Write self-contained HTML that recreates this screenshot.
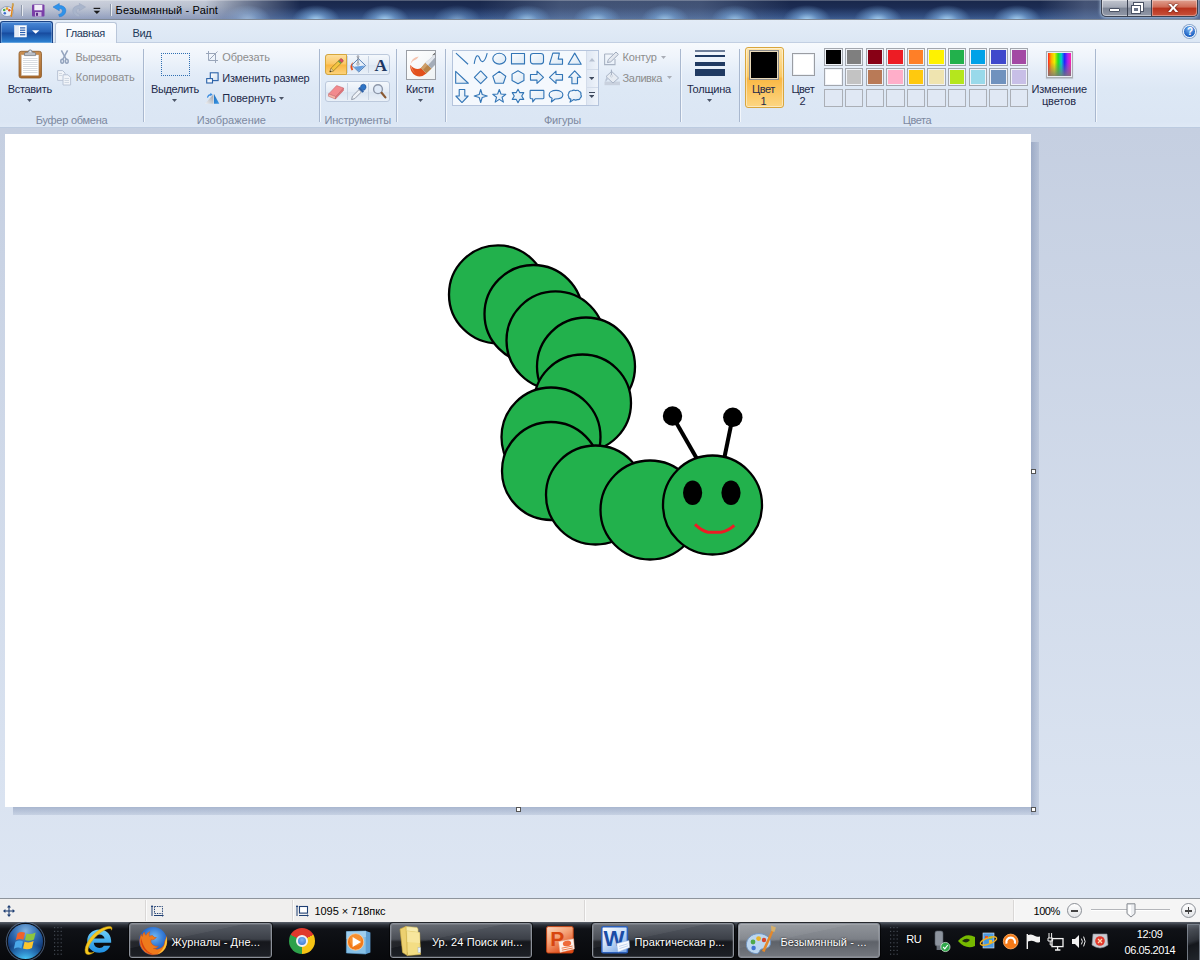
<!DOCTYPE html>
<html lang="ru"><head><meta charset="utf-8"><title>Безымянный - Paint</title>
<style>
*{box-sizing:border-box;margin:0;padding:0}
html,body{width:1200px;height:960px;overflow:hidden;background:#c9d3e3;font-family:"Liberation Sans","DejaVu Sans",sans-serif;font-size:11px;color:#1e2a4a}
.abs,#root *{position:absolute}
#root{position:relative;width:1200px;height:960px;overflow:hidden}
#title{left:0;top:0;width:1200px;height:20px;background:#1b2742}
#tabs{left:0;top:20px;width:1200px;height:23px;background:linear-gradient(#e3ecf7,#dce7f4);border-bottom:1px solid #c2cfe2}
#ribbon{left:0;top:43px;width:1200px;height:85px;background:linear-gradient(#f7fafd,#eff4fb 14px,#e3ecf8 30px,#dde8f5 46px,#dbe6f4 78px,#dfe9f6)}
#work{left:0;top:128px;width:1200px;height:771px;background:linear-gradient(#c5cfe1,#dde6f3)}
#canvas{left:5px;top:134px;width:1026px;height:673px;background:#fff}
#status{left:0;top:898px;width:1200px;height:24px;background:#f0efee;border-top:1px solid #8e949c}
#taskbar{left:0;top:921px;width:1200px;height:39px;background:#141a25}
.t{white-space:nowrap;line-height:14px;height:14px}
.c{text-align:center}
.gl{color:#7d89a0;font-size:11px}
.dis{color:#8d8d8d}
.sep{width:1px;top:49px;height:73px;background:#a9b8cf;box-shadow:1px 0 0 #f3f7fc}
.hd{width:5px;height:5px;background:#fff;border:1px solid #555}
</style></head><body><div id="root">
<div id="title" style="background:radial-gradient(ellipse 24px 15px at 247px 20px,rgba(175,218,250,0.95),rgba(130,180,230,0.57) 45%,rgba(90,130,190,0) 100%),radial-gradient(ellipse 24px 15px at 316px 20px,rgba(175,218,250,0.95),rgba(130,180,230,0.57) 45%,rgba(90,130,190,0) 100%),radial-gradient(ellipse 24px 15px at 385px 20px,rgba(175,218,250,0.95),rgba(130,180,230,0.57) 45%,rgba(90,130,190,0) 100%),radial-gradient(ellipse 24px 15px at 457px 20px,rgba(175,218,250,0.55),rgba(130,180,230,0.33) 45%,rgba(90,130,190,0) 100%),radial-gradient(ellipse 24px 15px at 527px 20px,rgba(175,218,250,0.8),rgba(130,180,230,0.48) 45%,rgba(90,130,190,0) 100%),radial-gradient(ellipse 24px 15px at 597px 20px,rgba(175,218,250,0.8),rgba(130,180,230,0.48) 45%,rgba(90,130,190,0) 100%),radial-gradient(ellipse 24px 15px at 665px 20px,rgba(175,218,250,0.8),rgba(130,180,230,0.48) 45%,rgba(90,130,190,0) 100%),radial-gradient(ellipse 24px 15px at 735px 20px,rgba(175,218,250,0.8),rgba(130,180,230,0.48) 45%,rgba(90,130,190,0) 100%),radial-gradient(ellipse 24px 15px at 807px 20px,rgba(175,218,250,0.95),rgba(130,180,230,0.57) 45%,rgba(90,130,190,0) 100%),radial-gradient(ellipse 24px 15px at 878px 20px,rgba(175,218,250,0.95),rgba(130,180,230,0.57) 45%,rgba(90,130,190,0) 100%),radial-gradient(ellipse 24px 15px at 947px 20px,rgba(175,218,250,0.95),rgba(130,180,230,0.57) 45%,rgba(90,130,190,0) 100%),radial-gradient(ellipse 24px 15px at 1017px 20px,rgba(175,218,250,0.95),rgba(130,180,230,0.57) 45%,rgba(90,130,190,0) 100%),linear-gradient(90deg,rgba(0,0,0,0) 480px,rgba(130,150,180,.38) 560px,rgba(130,150,180,.38) 700px,rgba(0,0,0,0) 790px),linear-gradient(rgba(0,0,0,0) 35%,rgba(80,120,180,.42)),linear-gradient(#19274a,#1c2d55 45%,#263c6a 80%,#34507f)"></div>
<div style="left:0;top:0;width:310px;height:20px;background:linear-gradient(rgba(255,255,255,.2),rgba(255,255,255,0) 35%,rgba(70,92,150,.42)),linear-gradient(90deg,rgba(206,211,222,.97),rgba(192,199,213,.95) 200px,rgba(180,190,208,.95));-webkit-mask-image:linear-gradient(90deg,#000 205px,rgba(0,0,0,.55) 245px,transparent 300px);mask-image:linear-gradient(90deg,#000 205px,rgba(0,0,0,.55) 245px,transparent 300px)"></div>
<div style="left:0;top:0;width:1200px;height:1px;background:rgba(255,255,255,.25)"></div>
<div style="left:1040px;top:0;width:160px;height:20px;background:linear-gradient(90deg,rgba(120,135,165,0),rgba(120,135,165,.45) 45px,rgba(120,135,165,.45))"></div>
<div style="left:0;top:19px;width:1200px;height:1px;background:#7f8894"></div>
<div id="tabs"></div>
<!-- quick access icons -->
<svg style="left:0;top:2px" width="112" height="17" viewBox="0 2 112 17">
 <ellipse cx="7" cy="11.5" rx="6.3" ry="5" fill="#e9eef6" stroke="#8292ad" stroke-width=".8"/>
 <circle cx="4.2" cy="10" r="1.3" fill="#4aa84a"/><circle cx="7" cy="8.6" r="1.3" fill="#e2a21f"/><circle cx="4.8" cy="13.3" r="1.3" fill="#3f6fd0"/><circle cx="9.3" cy="10.3" r="1.2" fill="#d8412f"/>
 <path d="M12.2 4 L13.6 4.5 L12 17 L10.4 16.6 Z" fill="#e08a1e"/><path d="M12 3 L14 3.6 L13.5 6.5 L11.8 6 Z" fill="#c9a35a"/>
 <rect x="21" y="5" width="1" height="11" fill="#8e98aa"/><rect x="22" y="5" width="1" height="11" fill="#e6eaf0"/>
 <rect x="32" y="4.5" width="12.5" height="12" rx="1" fill="#7a3fa8"/><rect x="34.3" y="5" width="8" height="5.3" fill="#f2eef8"/><rect x="35" y="12" width="6.5" height="4.5" fill="#c9b6dd"/><rect x="36" y="12.8" width="2" height="3" fill="#5a2c85"/>
 <path d="M53 7 L59.3 3.4 L59.3 5.6 C63.6 5.4 66 8 65.8 11 C65.6 14 63 16.4 59.6 16.8 L58.6 14.6 C61 14 62.4 12.6 62.4 11 C62.4 9.4 61.2 8.6 59.3 8.6 L59.3 10.8 Z" fill="#2f93ea" stroke="#1e74cf" stroke-width=".5"/>
 <path d="M85.6 7 L79.3 3.4 L79.3 5.6 C75 5.4 72.6 8 72.8 11 C73 14 75.6 16.4 79 16.8 L80 14.6 C77.6 14 76.2 12.6 76.2 11 C76.2 9.4 77.4 8.6 79.3 8.6 L79.3 10.8 Z" fill="#a9b5cb" stroke="#9aa7bf" stroke-width=".5"/>
 <rect x="93.6" y="7.8" width="6.6" height="1.2" fill="#1a1a1a"/><path d="M93.6 10.8 L100.2 10.8 L96.9 14 Z" fill="#1a1a1a"/>
 <rect x="110" y="4" width="1" height="12" fill="#8e98aa"/><rect x="111" y="4" width="1" height="12" fill="#e6eaf0"/>
</svg>
<!-- window buttons -->
<div style="left:1101px;top:0;width:97px;height:17px;border:1px solid #3b4252;border-top:none;border-radius:0 0 5px 5px;background:linear-gradient(#c2c6cf,#a3a9b6 45%,#7c8494 50%,#9299a8);box-shadow:0 0 0 1px rgba(255,255,255,.45) inset,0 0 3px 1px rgba(200,225,250,.7)"></div>
<div style="left:1127px;top:0;width:1px;height:16px;background:#3b4252"></div>
<div style="left:1152px;top:0;width:45px;height:16px;border-radius:0 0 4px 0;background:linear-gradient(#e0a090,#cf6a55 45%,#b8321c 50%,#c8513a);box-shadow:-1px 0 0 #3b4252,0 0 0 1px rgba(255,255,255,.35) inset"></div>
<div style="left:1109px;top:8px;width:11px;height:4px;background:#fff;border:1px solid #4a5264;border-radius:1px"></div>
<div style="left:1134px;top:3px;width:9px;height:8px;border:2px solid #fff;box-shadow:0 0 0 1px #4a5264"></div>
<div style="left:1132px;top:6px;width:8px;height:7px;border:2px solid #fff;background:#6a7488;box-shadow:0 0 0 1px #4a5264"></div>
<div class="t" style="left:1168px;top:-1px;font-size:15px;font-weight:700;color:#fff;line-height:16px;height:16px;text-shadow:0 0 1px #5a1a10,0 0 2px #5a1a10;transform:scaleX(1.25);transform-origin:left">x</div>
<!-- file button -->
<div style="left:0;top:21px;width:53px;height:22px;border-radius:3px 3px 0 0;border:1px solid #1b4487;border-bottom:none;background:linear-gradient(#4a8ad8,#2560b5 48%,#174a9e 52%,#2f86d6);box-shadow:0 0 0 1px rgba(255,255,255,.25) inset"></div>
<svg style="left:14px;top:25.2px" width="28" height="14" viewBox="0 0 28 14">
 <rect x=".5" y=".5" width="12" height="11.5" fill="#fff" stroke="#dfe8f5" stroke-width=".6"/>
 <rect x="1" y="1" width="4" height="10.5" fill="#e6ecf5"/>
 <g fill="#2a5fb0"><rect x="6" y="2.3" width="5.3" height="1.2"/><rect x="6" y="4.6" width="5.3" height="1.2"/><rect x="6" y="6.9" width="5.3" height="1.2"/><rect x="6" y="9.2" width="5.3" height="1.2"/></g>
 <path d="M18 5.2 L25.4 5.2 L21.7 8.8 Z" fill="#fff"/>
</svg>
<!-- active tab -->
<div style="left:55px;top:22px;width:62px;height:21px;border:1px solid #b9c6d9;border-bottom:none;border-radius:3px 3px 0 0;background:linear-gradient(#fbfdff,#f1f6fc)"></div>
<!-- help -->
<div style="left:1183px;top:25px;width:13px;height:13px;border-radius:50%;background:radial-gradient(circle at 50% 30%,#7db6f2,#1f63c4 70%);border:1px solid #e8f0fa;box-shadow:0 0 0 1px #8aa6cc"></div>
<div class="t" style="left:1187px;top:24.5px;font-size:10px;font-weight:700;color:#fff">?</div>

<div id="ribbon"></div>
<div style="left:0;top:127px;width:1200px;height:1px;background:#bccbe0"></div>
<div style="left:0;top:128px;width:1200px;height:2px;background:linear-gradient(#a9b5c9,#c2cce0)"></div>
<div class="sep" style="left:143.0px"></div>
<div class="sep" style="left:319.0px"></div>
<div class="sep" style="left:395.5px"></div>
<div class="sep" style="left:445.0px"></div>
<div class="sep" style="left:679.5px"></div>
<div class="sep" style="left:739.0px"></div>
<div class="sep" style="left:1095.0px"></div>
<svg style="left:27.1px;top:99.3px" width="5" height="3" viewBox="0 0 5 3"><path d="M0 0 L5 0 L2.5 3 Z" fill="#4c5567"/></svg>
<svg style="left:172.3px;top:99.3px" width="5" height="3" viewBox="0 0 5 3"><path d="M0 0 L5 0 L2.5 3 Z" fill="#4c5567"/></svg>
<svg style="left:417.8px;top:99.0px" width="5" height="3" viewBox="0 0 5 3"><path d="M0 0 L5 0 L2.5 3 Z" fill="#4c5567"/></svg>
<svg style="left:706.5px;top:99.0px" width="5" height="3" viewBox="0 0 5 3"><path d="M0 0 L5 0 L2.5 3 Z" fill="#4c5567"/></svg>
<svg style="left:279.0px;top:96.5px" width="5" height="3" viewBox="0 0 5 3"><path d="M0 0 L5 0 L2.5 3 Z" fill="#4c5567"/></svg>
<svg style="left:661.0px;top:55.5px" width="5" height="3" viewBox="0 0 5 3"><path d="M0 0 L5 0 L2.5 3 Z" fill="#a9adb6"/></svg>
<svg style="left:666.5px;top:76.0px" width="5" height="3" viewBox="0 0 5 3"><path d="M0 0 L5 0 L2.5 3 Z" fill="#a9adb6"/></svg>
<svg style="left:17px;top:48px" width="28" height="32" viewBox="17 48 28 32">
<defs><linearGradient id="gb" x1="0" y1="0" x2="0" y2="1"><stop offset="0" stop-color="#c98f52"/><stop offset="1" stop-color="#a8682c"/></linearGradient></defs>
<rect x="19" y="51.3" width="22.5" height="26.7" rx="2.2" fill="url(#gb)" stroke="#8d5a28" stroke-width=".8"/>
<rect x="21.6" y="55" width="17" height="20.3" fill="#fff" stroke="#d8d8d8" stroke-width=".5"/>
<g stroke="#c9ced6" stroke-width=".7"><line x1="23" y1="58.5" x2="37.5" y2="58.5"/><line x1="23" y1="60.5" x2="37.5" y2="60.5"/><line x1="23" y1="62.5" x2="37.5" y2="62.5"/><line x1="23" y1="64.5" x2="37.5" y2="64.5"/><line x1="23" y1="66.5" x2="37.5" y2="66.5"/><line x1="23" y1="68.5" x2="37.5" y2="68.5"/><line x1="23" y1="70.5" x2="37.5" y2="70.5"/><line x1="23" y1="72.5" x2="37.5" y2="72.5"/></g>
<path d="M24.5 55.6 L24.5 53.6 Q24.5 52.6 26 52.4 L28 52.2 Q28.4 49.8 30.2 49.8 Q32 49.8 32.4 52.2 L34.4 52.4 Q35.6 52.6 35.6 53.6 L35.6 55.6 Z" fill="#b9bec6" stroke="#6f747c" stroke-width=".7"/>
<circle cx="30.2" cy="51.6" r=".8" fill="#f2f2f2"/>
</svg>
<svg style="left:60px;top:49.5px" width="9" height="14" viewBox="0 0 9 14"><g fill="none" stroke="#93a3bd" stroke-width="1.5"><line x1="1.4" y1=".4" x2="6.2" y2="9.4"/><line x1="7.6" y1=".4" x2="2.8" y2="9.4"/><ellipse cx="2.2" cy="11.2" rx="1.4" ry="2"/><ellipse cx="6.8" cy="11.2" rx="1.4" ry="2"/></g></svg>
<svg style="left:57px;top:70px" width="15" height="16" viewBox="0 0 15 16"><g fill="#f1f4f9" stroke="#b4bfd1" stroke-width=".9"><path d="M.6 .6 L5.6 .6 L8 3 L8 10.4 L.6 10.4 Z"/><path d="M6 4.8 L11 4.8 L13.6 7.4 L13.6 15 L6 15 Z"/></g><g stroke="#c2cbd9" stroke-width=".7"><line x1="2" y1="3.5" x2="5" y2="3.5"/><line x1="2" y1="5.5" x2="5" y2="5.5"/><line x1="7.5" y1="8.5" x2="12" y2="8.5"/><line x1="7.5" y1="10.5" x2="12" y2="10.5"/><line x1="7.5" y1="12.5" x2="12" y2="12.5"/></g></svg>
<div style="left:161px;top:53px;width:29px;height:23px;border:1px dotted #2f6fb2"></div>
<svg style="left:205.8px;top:50.8px" width="12" height="12" viewBox="0 0 12 12"><g fill="none" stroke="#9aa6ba" stroke-width="1"><path d="M2.5 0 L2.5 9.5 L12 9.5"/><path d="M0 2.5 L9.5 2.5 L9.5 12"/><line x1="3.5" y1="8.5" x2="11.5" y2=".5"/></g></svg>
<svg style="left:206px;top:72px" width="13" height="12" viewBox="0 0 13 12"><defs><linearGradient id="rz" x1="0" y1="0" x2="1" y2="1"><stop offset="0" stop-color="#fff"/><stop offset="1" stop-color="#cfdff0"/></linearGradient></defs><rect x="4.3" y=".8" width="7.8" height="7.8" fill="url(#rz)" stroke="#2a62a8" stroke-width="1.1"/><rect x=".7" y="6.6" width="5.8" height="4.4" fill="#f2f7fc" stroke="#2a62a8" stroke-width="1.1"/></svg>
<svg style="left:204px;top:92px" width="16" height="12" viewBox="204 92 16 12"><defs><linearGradient id="rg1" x1="0" y1="1" x2="1" y2="0"><stop offset="0" stop-color="#f2f2f2"/><stop offset="1" stop-color="#9aa0aa"/></linearGradient><linearGradient id="rg2" x1="0" y1="0" x2="1" y2="1"><stop offset="0" stop-color="#1c6fc0"/><stop offset="1" stop-color="#3f9ae6"/></linearGradient></defs><path d="M205 103.7 L213.4 103.7 L213.4 94.2 Z" fill="url(#rg1)"/><path d="M214 94 L214 103.7 L219.3 103.7 Z" fill="url(#rg2)"/><path d="M207.4 97.6 Q208.2 94.6 211 94.6" fill="none" stroke="#3a8de0" stroke-width="1.1"/><path d="M210.4 92.8 L212.6 94.6 L210.4 96.2 Z" fill="#3a8de0"/></svg>
<div style="left:325px;top:54.3px;width:65px;height:20.5px;border:1px solid #bcc9dc;border-radius:3px;background:linear-gradient(#f4f8fc,#e4ecf6 50%,#dbe5f1 52%,#e9f0f8)"></div>
<div style="left:346.5px;top:56.3px;width:1px;height:16.5px;background:#c8d3e2"></div><div style="left:368px;top:56.3px;width:1px;height:16.5px;background:#c8d3e2"></div>
<div style="left:325px;top:81.4px;width:65px;height:20.5px;border:1px solid #bcc9dc;border-radius:3px;background:linear-gradient(#f4f8fc,#e4ecf6 50%,#dbe5f1 52%,#e9f0f8)"></div>
<div style="left:346.5px;top:83.4px;width:1px;height:16.5px;background:#c8d3e2"></div><div style="left:368px;top:83.4px;width:1px;height:16.5px;background:#c8d3e2"></div>
<div style="left:325px;top:54.3px;width:22px;height:20.5px;border:1px solid #d6a73c;border-radius:3px 0 0 3px;background:linear-gradient(#fddf9e,#fbc764 48%,#fab63f 52%,#fcd27c)"></div>
<svg style="left:328px;top:58px" width="16.2" height="15.3" viewBox="0 0 18 17"><path d="M2 15.5 L3.4 11.3 L12.6 2.2 L15.4 5 L6.2 14.2 Z" fill="#f3c540" stroke="#8a6a1a" stroke-width=".7"/><path d="M12.6 2.2 L14 .9 Q14.8 .4 15.6 1.2 L16.6 2.3 Q17.2 3.1 16.6 3.8 L15.4 5 Z" fill="#e0506a" stroke="#8a3a3a" stroke-width=".6"/><path d="M11.6 3.2 L14.4 6" stroke="#4c9a4c" stroke-width="1.4"/><path d="M2 15.5 L3.4 11.3 L6.2 14.2 Z" fill="#e8cfa0" stroke="#8a6a1a" stroke-width=".5"/><path d="M2 15.5 L2.6 13.8 L3.8 15 Z" fill="#222"/></svg>
<svg style="left:348px;top:55px" width="20" height="19" viewBox="0 0 20 19"><path d="M3.6 15.6 Q.6 10.6 5.4 6.8 Q3.4 10.4 5.2 14.8 Z" fill="#e8501e"/><path d="M10.4 3.6 L17.6 10.6 L10.8 17 L3.8 10.2 Z" fill="#e9f1fa" stroke="#4a76b0" stroke-width=".9"/><path d="M6 11.8 L10.8 16.6 L16.8 10.6 Z" fill="#4f8fd8" opacity=".85"/><path d="M10 1.4 L10 8.6" stroke="#7a7f88" stroke-width="1"/><circle cx="10" cy="9" r="1.2" fill="#fff" stroke="#6a6f78" stroke-width=".6"/><circle cx="10" cy="1.6" r="1" fill="#c8ccd3" stroke="#7a7f88" stroke-width=".5"/></svg>
<div class="t" style="left:374.4px;top:55.9px;font-family:'Liberation Serif',serif;font-weight:700;font-size:17.5px;line-height:18px;height:18px;color:#1f3864">A</div>
<svg style="left:327px;top:83px" width="19" height="17" viewBox="0 0 19 17"><path d="M1.6 11 L9.6 2.6 L16.6 5 L8.8 13.6 Z" fill="#f28a8e" stroke="#c86a6e" stroke-width=".6"/><path d="M1.6 11 L8.8 13.6 L8.4 16 L1.4 13.2 Z" fill="#f9b9a8" stroke="#c86a6e" stroke-width=".6"/><path d="M8.8 13.6 L16.6 5 L16.4 7.6 L8.4 16 Z" fill="#e27378" stroke="#c86a6e" stroke-width=".6"/></svg>
<svg style="left:350px;top:83px" width="17" height="18" viewBox="0 0 17 18"><path d="M1.6 16.6 L2.4 13.2 L9 6.6 L11.4 9 L4.8 15.6 Z" fill="#eef2f7" stroke="#7d8796" stroke-width=".8"/><path d="M8.2 5.4 L12.6 9.8 L14 8.4 L9.6 4 Z" fill="#2a5ea6"/><path d="M10.4 4.8 Q10.4 1 13.6 1.2 Q16.6 1.6 16 4.8 Q15.4 7.4 13 7.4 Z" fill="#2e74c6" stroke="#1d4f94" stroke-width=".6"/></svg>
<svg style="left:371px;top:83px" width="18" height="18" viewBox="371 83 18 18"><circle cx="378" cy="89.2" r="4.4" fill="#dfeaf8" stroke="#8c96a8" stroke-width="1.4"/><path d="M381.6 92.8 L385.4 97.4" stroke="#8a5a34" stroke-width="2.2" stroke-linecap="round"/></svg>
<div style="left:406px;top:50px;width:30px;height:29.5px;border:1px solid #9b9fa6;background:linear-gradient(135deg,#fff,#eef2f4)"></div>
<svg style="left:407px;top:51px" width="28" height="27.5" viewBox="0 0 28 27.5"><path d="M11.6 5.6 Q4 6.8 3.4 14.6 Q4 10 9 8.4 Q11 7.4 11.6 5.6 Z" fill="#f4b8a0" opacity=".85"/><path d="M3.2 14 Q2.6 21 8.6 24.6 Q14.4 27 19.4 22.6 L14 17 Q9 20 3.2 14 Z" fill="#e2501c"/><path d="M3.2 14 Q4.4 20 9 22.6 Q5 19.4 4.6 15 Z" fill="#f39a78"/><path d="M14 17 L19.4 22.6 L24.6 17.6 L18.4 11.8 Z" fill="#b8844a"/><path d="M14 17 L16 19 L20.6 14 L18.4 11.8 Z" fill="#cfa06a"/><path d="M18.4 11.8 L24.6 17.6 L28 14 L28 3.4 Z" fill="#a4acb8"/><path d="M18.4 11.8 L21 14.2 L28 6.6 L28 3.4 Z" fill="#e3e7ed"/><path d="M25 4.6 L28 1.8 L28 3.6 Z" fill="#555"/></svg>
<div style="left:452px;top:50px;width:147px;height:56px;border:1px solid #b5c4dc;background:#f4f8fd"></div>
<div style="left:585.5px;top:51px;width:12.5px;height:54px;background:linear-gradient(90deg,#dfe7f3,#eef3fa);border-left:1px solid #d3dcea"></div>
<div style="left:585.5px;top:68.5px;width:12.5px;height:1px;background:#d3dcea"></div><div style="left:585.5px;top:87px;width:12.5px;height:1px;background:#d3dcea"></div>
<svg style="left:589px;top:58px" width="6" height="4" viewBox="0 0 6 4"><path d="M0 3.5 L3 0 L6 3.5 Z" fill="#b6c0d0"/></svg>
<svg style="left:589.1px;top:76.8px" width="5.4" height="3" viewBox="0 0 5.4 3"><path d="M0 0 L5.4 0 L2.7 3 Z" fill="#3f4a5e"/></svg>
<div style="left:589px;top:92px;width:5.6px;height:1.2px;background:#3f4a5e"></div>
<svg style="left:589.1px;top:94.8px" width="5.4" height="3" viewBox="0 0 5.4 3"><path d="M0 0 L5.4 0 L2.7 3 Z" fill="#3f4a5e"/></svg>
<svg style="left:452px;top:50px" width="135" height="56" viewBox="452 50 135 56"><defs><linearGradient id="sf" x1="0" y1="0" x2="1" y2="1"><stop offset="0" stop-color="#fafcfe"/><stop offset="1" stop-color="#dbe8f4"/></linearGradient></defs><g fill="url(#sf)" stroke="#3275b6" stroke-width="1.2" stroke-linejoin="round"><g transform="translate(462,58.7) scale(.93)"><line x1="-6.5" y1="-6" x2="6.5" y2="6"/></g><g transform="translate(480.7,58.7) scale(.93)"><path d="M-7 5.5 C-5 -6,-2.5 -4,-1 0 S4 6,7 -6" fill="none"/></g><g transform="translate(499.3,58.7) scale(.93)"><ellipse cx="0" cy="0" rx="7" ry="5.8"/></g><g transform="translate(518,58.7) scale(.93)"><rect x="-7" y="-5.6" width="14" height="11.2"/></g><g transform="translate(537,58.7) scale(.93)"><rect x="-7" y="-5.6" width="14" height="11.2" rx="2.8"/></g><g transform="translate(556,58.7) scale(.93)"><path d="M-7 6 L-3.4 -6 L3.6 -6 L2.4 .4 L7 .4 L7 6 Z"/></g><g transform="translate(574.7,58.7) scale(.93)"><path d="M-7 6 L0 -6 L7 6 Z"/></g><g transform="translate(462,77.3) scale(.93)"><path d="M-6.8 6.4 L-6.8 -6.4 L6.8 6.4 Z"/></g><g transform="translate(480.7,77.3) scale(.93)"><path d="M0 -6.8 L6.8 0 L0 6.8 L-6.8 0 Z"/></g><g transform="translate(499.3,77.3) scale(.93)"><path d="M0 -6.4 L7 -1.2 L4.4 6.4 L-4.4 6.4 L-7 -1.2 Z"/></g><g transform="translate(518,77.3) scale(.93)"><path d="M0 -7 L6.4 -3.4 L6.4 3.4 L0 7 L-6.4 3.4 L-6.4 -3.4 Z"/></g><g transform="translate(537,77.3) scale(.93)"><path d="M-7 -3 L0 -3 L0 -6.6 L7 0 L0 6.6 L0 3 L-7 3 Z"/></g><g transform="translate(556,77.3) scale(.93)"><path d="M7 -3 L0 -3 L0 -6.6 L-7 0 L0 6.6 L0 3 L7 3 Z"/></g><g transform="translate(574.7,77.3) scale(.93)"><path d="M-3 7 L-3 0 L-6.6 0 L0 -7 L6.6 0 L3 0 L3 7 Z"/></g><g transform="translate(462,96) scale(.93)"><path d="M-3 -7 L-3 0 L-6.6 0 L0 7 L6.6 0 L3 0 L3 -7 Z"/></g><g transform="translate(480.7,96) scale(.93)"><path d="M0 -7 L1.6 -1.6 L7 0 L1.6 1.6 L0 7 L-1.6 1.6 L-7 0 L-1.6 -1.6 Z"/></g><g transform="translate(499.3,96) scale(.93)"><path d="M0 -7 L1.8 -2.2 L7 -1.8 L3 1.4 L4.4 6.6 L0 3.6 L-4.4 6.6 L-3 1.4 L-7 -1.8 L-1.8 -2.2 Z"/></g><g transform="translate(518,96) scale(.93)"><path d="M0 -7.2 L2 -3.6 L6.2 -3.6 L4 0 L6.2 3.6 L2 3.6 L0 7.2 L-2 3.6 L-6.2 3.6 L-4 0 L-6.2 -3.6 L-2 -3.6 Z"/></g><g transform="translate(537,96) scale(.93)"><path d="M-7 -6 L7 -6 Q7.4 -6 7.4 -5 L7.4 2 Q7.4 3 6.4 3 L-2 3 L-4.6 6.4 L-4.6 3 L-6.4 3 Q-7.4 3 -7.4 2 L-7.4 -5 Q-7.4 -6 -7 -6 Z"/></g><g transform="translate(556,96) scale(.93)"><path d="M0 -6 C4.4 -6 7.4 -4 7.4 -1.4 C7.4 1.4 4 3.2 -1 3.2 L-5 6.4 L-4.2 2.4 C-6.4 1.6 -7.4 .2 -7.4 -1.4 C-7.4 -4 -4.4 -6 0 -6 Z"/></g><g transform="translate(574.7,96) scale(.93)"><path d="M-3 -5.6 Q-1 -7 1 -5.8 Q3.6 -6.8 5 -4.8 Q7.4 -4 6.6 -1.6 Q8 .6 6 2 Q5.6 4.2 3 3.8 Q1 5 -1 3.8 L-5 6.6 L-4 3.4 Q-6.6 3 -6.4 .8 Q-8 -1 -6.4 -2.8 Q-6.4 -5.4 -3 -5.6 Z"/></g></g></svg>
<svg style="left:604px;top:51px" width="16" height="15" viewBox="0 0 16 15"><path d="M.6 3 L9 3 M.6 3 L.6 13.6 L11 13.6 L11 8" fill="none" stroke="#a9b3c4" stroke-width="1.1"/><path d="M3.4 11.6 L4.4 8.4 L12 1 L14.4 3.4 L6.8 10.8 Z" fill="#e4e8ef" stroke="#9aa5b8" stroke-width=".9"/></svg>
<svg style="left:604px;top:69px" width="17" height="17" viewBox="0 0 17 17"><rect x=".5" y="12.6" width="15.5" height="3.6" fill="#c9d1de"/><path d="M7.6 2.4 L14.6 9 L9 14 L2 7.6 Z" fill="#e6ebf2" stroke="#a3aec1" stroke-width=".9"/><path d="M2.6 8.4 Q.6 11 1.6 13 L4 10 Z" fill="#b9c3d3"/><path d="M7.4 .6 L7.4 6.6" stroke="#a3aec1" stroke-width="1"/><circle cx="7.4" cy="7" r="1" fill="#fff" stroke="#a3aec1" stroke-width=".5"/></svg>
<div style="left:694.7px;top:50.4px;width:30px;height:1.2px;background:#6f7f9a"></div><div style="left:694.7px;top:55px;width:30px;height:2px;background:#203a62"></div><div style="left:694.7px;top:62px;width:30px;height:3.6px;background:#203a62"></div><div style="left:694.7px;top:69.4px;width:30px;height:6.2px;background:#203a62"></div>
<div style="left:744.6px;top:47.3px;width:39.2px;height:61.2px;border:1px solid #d9a63c;border-radius:3px;background:linear-gradient(#fde3a8,#fbc964 48%,#fab844 52%,#fcd683);box-shadow:0 0 0 1px rgba(255,255,255,.45) inset"></div>
<div style="left:749.3px;top:49.6px;width:29.8px;height:30.2px;border:1px solid #8c8c8c;background:#000;box-shadow:0 0 0 1px #e9d9b8 inset"></div>
<div style="left:792px;top:53.3px;width:22.8px;height:22.5px;border:1px solid #9a9da3;background:#fff;box-shadow:0 0 0 1px #eef1f5 inset"></div>
<div style="left:824.3px;top:48px;width:18.4px;height:18.2px;border:1px solid #a3a7ae;background:#000000;box-shadow:0 0 0 1px #f0f3f8 inset"></div>
<div style="left:844.9px;top:48px;width:18.4px;height:18.2px;border:1px solid #a3a7ae;background:#7f7f7f;box-shadow:0 0 0 1px #f0f3f8 inset"></div>
<div style="left:865.6px;top:48px;width:18.4px;height:18.2px;border:1px solid #a3a7ae;background:#880015;box-shadow:0 0 0 1px #f0f3f8 inset"></div>
<div style="left:886.2px;top:48px;width:18.4px;height:18.2px;border:1px solid #a3a7ae;background:#ed1c24;box-shadow:0 0 0 1px #f0f3f8 inset"></div>
<div style="left:906.8px;top:48px;width:18.4px;height:18.2px;border:1px solid #a3a7ae;background:#ff7f27;box-shadow:0 0 0 1px #f0f3f8 inset"></div>
<div style="left:927.4px;top:48px;width:18.4px;height:18.2px;border:1px solid #a3a7ae;background:#fff200;box-shadow:0 0 0 1px #f0f3f8 inset"></div>
<div style="left:948.1px;top:48px;width:18.4px;height:18.2px;border:1px solid #a3a7ae;background:#22b14c;box-shadow:0 0 0 1px #f0f3f8 inset"></div>
<div style="left:968.7px;top:48px;width:18.4px;height:18.2px;border:1px solid #a3a7ae;background:#00a2e8;box-shadow:0 0 0 1px #f0f3f8 inset"></div>
<div style="left:989.3px;top:48px;width:18.4px;height:18.2px;border:1px solid #a3a7ae;background:#3f48cc;box-shadow:0 0 0 1px #f0f3f8 inset"></div>
<div style="left:1010.0px;top:48px;width:18.4px;height:18.2px;border:1px solid #a3a7ae;background:#a349a4;box-shadow:0 0 0 1px #f0f3f8 inset"></div>
<div style="left:824.3px;top:68.3px;width:18.4px;height:18.2px;border:1px solid #a3a7ae;background:#ffffff;box-shadow:0 0 0 1px #f0f3f8 inset"></div>
<div style="left:844.9px;top:68.3px;width:18.4px;height:18.2px;border:1px solid #a3a7ae;background:#c3c3c3;box-shadow:0 0 0 1px #f0f3f8 inset"></div>
<div style="left:865.6px;top:68.3px;width:18.4px;height:18.2px;border:1px solid #a3a7ae;background:#b97a57;box-shadow:0 0 0 1px #f0f3f8 inset"></div>
<div style="left:886.2px;top:68.3px;width:18.4px;height:18.2px;border:1px solid #a3a7ae;background:#ffaec9;box-shadow:0 0 0 1px #f0f3f8 inset"></div>
<div style="left:906.8px;top:68.3px;width:18.4px;height:18.2px;border:1px solid #a3a7ae;background:#ffc90e;box-shadow:0 0 0 1px #f0f3f8 inset"></div>
<div style="left:927.4px;top:68.3px;width:18.4px;height:18.2px;border:1px solid #a3a7ae;background:#efe4b0;box-shadow:0 0 0 1px #f0f3f8 inset"></div>
<div style="left:948.1px;top:68.3px;width:18.4px;height:18.2px;border:1px solid #a3a7ae;background:#b5e61d;box-shadow:0 0 0 1px #f0f3f8 inset"></div>
<div style="left:968.7px;top:68.3px;width:18.4px;height:18.2px;border:1px solid #a3a7ae;background:#99d9ea;box-shadow:0 0 0 1px #f0f3f8 inset"></div>
<div style="left:989.3px;top:68.3px;width:18.4px;height:18.2px;border:1px solid #a3a7ae;background:#7092be;box-shadow:0 0 0 1px #f0f3f8 inset"></div>
<div style="left:1010.0px;top:68.3px;width:18.4px;height:18.2px;border:1px solid #a3a7ae;background:#c8bfe7;box-shadow:0 0 0 1px #f0f3f8 inset"></div>
<div style="left:824.3px;top:89.2px;width:18.4px;height:18.2px;border:1px solid #abafb6;background:#e0e8f4"></div>
<div style="left:844.9px;top:89.2px;width:18.4px;height:18.2px;border:1px solid #abafb6;background:#e0e8f4"></div>
<div style="left:865.6px;top:89.2px;width:18.4px;height:18.2px;border:1px solid #abafb6;background:#e0e8f4"></div>
<div style="left:886.2px;top:89.2px;width:18.4px;height:18.2px;border:1px solid #abafb6;background:#e0e8f4"></div>
<div style="left:906.8px;top:89.2px;width:18.4px;height:18.2px;border:1px solid #abafb6;background:#e0e8f4"></div>
<div style="left:927.4px;top:89.2px;width:18.4px;height:18.2px;border:1px solid #abafb6;background:#e0e8f4"></div>
<div style="left:948.1px;top:89.2px;width:18.4px;height:18.2px;border:1px solid #abafb6;background:#e0e8f4"></div>
<div style="left:968.7px;top:89.2px;width:18.4px;height:18.2px;border:1px solid #abafb6;background:#e0e8f4"></div>
<div style="left:989.3px;top:89.2px;width:18.4px;height:18.2px;border:1px solid #abafb6;background:#e0e8f4"></div>
<div style="left:1010.0px;top:89.2px;width:18.4px;height:18.2px;border:1px solid #abafb6;background:#e0e8f4"></div>
<div style="left:1045.6px;top:51px;width:27px;height:26.8px;border:1px solid #a9adb3;background:#e9edf2;box-shadow:0 1px 1px rgba(0,0,0,.15)"></div>
<div style="left:1047.6px;top:53px;width:23px;height:22.8px;background:linear-gradient(rgba(128,128,128,0),rgba(128,128,128,0) 40%,rgba(120,120,120,.85)),linear-gradient(90deg,#f22,#fa0 14%,#ee0 28%,#2d2 44%,#0cc 58%,#22f 72%,#a2e 86%,#f2a)"></div>

<div id="work"></div>
<div id="canvas"></div>
<div style="left:1031px;top:142px;width:7.5px;height:672.5px;background:linear-gradient(90deg,rgba(100,120,160,.42),rgba(100,120,160,.17))"></div>
<div style="left:13px;top:807px;width:1018px;height:7.5px;background:linear-gradient(rgba(100,120,160,.42),rgba(100,120,160,.17))"></div>
<svg id="draw" style="left:5px;top:134px" width="1026" height="673" viewBox="5 134 1026 673">
<g fill="#22b14c" stroke="#000" stroke-width="2.3">
<circle cx="498" cy="294.4" r="49"/>
<circle cx="533.5" cy="314" r="49"/>
<circle cx="555.5" cy="340.4" r="49"/>
<circle cx="586" cy="366.5" r="49"/>
<circle cx="582.5" cy="403" r="48.5"/>
<circle cx="551" cy="437" r="49.5"/>
<circle cx="551" cy="471" r="49"/>
<circle cx="595.5" cy="495" r="49.5"/>
<circle cx="650" cy="510" r="49.5"/>
<line x1="673" y1="417" x2="696.5" y2="458" stroke-width="4"/>
<line x1="732.5" y1="418" x2="724.5" y2="457" stroke-width="4"/>
<circle cx="712.5" cy="505" r="49.5"/>
</g>
<circle cx="672.5" cy="416" r="9.7" fill="#000"/>
<circle cx="732.8" cy="417.3" r="9.7" fill="#000"/>
<ellipse cx="692.6" cy="492.8" rx="9.6" ry="12.2" fill="#000"/>
<ellipse cx="731" cy="492.8" rx="9.6" ry="12.2" fill="#000"/>
<path d="M695 524.3 Q702 531 708 532.2 L721 532.2 Q728 531 734.3 525.3" fill="none" stroke="#ed1c24" stroke-width="3"/>
</svg>
<div class="hd" style="left:1031px;top:468.7px"></div>
<div class="hd" style="left:516px;top:807px"></div>
<div class="hd" style="left:1031px;top:807px"></div>

<div id="status"></div>
<div style="left:1013px;top:899px;width:187px;height:22px;background:#f5f5f5"></div>
<div style="left:145.0px;top:900px;width:1px;height:21px;background:#d9d7d6"></div><div style="left:146.0px;top:900px;width:1px;height:21px;background:#fbfbfb"></div>
<div style="left:292.0px;top:900px;width:1px;height:21px;background:#d9d7d6"></div><div style="left:293.0px;top:900px;width:1px;height:21px;background:#fbfbfb"></div>
<div style="left:583.8px;top:900px;width:1px;height:21px;background:#d9d7d6"></div><div style="left:584.8px;top:900px;width:1px;height:21px;background:#fbfbfb"></div>
<div style="left:1012.5px;top:900px;width:1px;height:21px;background:#d9d7d6"></div><div style="left:1013.5px;top:900px;width:1px;height:21px;background:#fbfbfb"></div>
<svg style="left:3px;top:905px" width="12" height="12" viewBox="0 0 12 12"><g stroke="#1f3f73" stroke-width="1.1" fill="#1f3f73"><line x1="6" y1="1.5" x2="6" y2="10.5"/><line x1="1.5" y1="6" x2="10.5" y2="6"/></g><g fill="#1f3f73"><path d="M6 0 L8 2.4 L4 2.4 Z"/><path d="M6 12 L8 9.6 L4 9.6 Z"/><path d="M0 6 L2.4 4 L2.4 8 Z"/><path d="M12 6 L9.6 4 L9.6 8 Z"/></g></svg>
<svg style="left:151px;top:905px" width="13" height="12" viewBox="0 0 13 12"><rect x="3.5" y="1.5" width="8" height="7" fill="none" stroke="#1f3f73" stroke-width="1" stroke-dasharray="1.4 1"/><path d="M1 1 L1 11 M3 10.5 L12 10.5" stroke="#1f3f73" stroke-width="1" fill="none"/><path d="M1 0 L2.4 2 L-.4 2 Z M13 10.5 L11 9.2 L11 11.8 Z" fill="#1f3f73"/></svg>
<svg style="left:296px;top:905px" width="13" height="12" viewBox="0 0 13 12"><rect x="3.5" y="1.5" width="8" height="6.6" fill="#fff" stroke="#1f3f73" stroke-width="1.1"/><path d="M1 1 L1 11 M3 10.5 L12 10.5" stroke="#1f3f73" stroke-width="1" fill="none"/><path d="M1 0 L2.4 2 L-.4 2 Z M13 10.5 L11 9.2 L11 11.8 Z" fill="#1f3f73"/></svg>
<div style="left:1066.5px;top:903.3px;width:15px;height:15px;border-radius:50%;border:1px solid #8b8f96;background:linear-gradient(#fff,#e3e5e8)"></div>
<div style="left:1070.5px;top:910.1px;width:7px;height:1.6px;background:#444"></div>
<div style="left:1181.0px;top:903.3px;width:15px;height:15px;border-radius:50%;border:1px solid #8b8f96;background:linear-gradient(#fff,#e3e5e8)"></div>
<div style="left:1185.0px;top:910.1px;width:7px;height:1.6px;background:#444"></div>
<div style="left:1187.7px;top:907.4px;width:1.6px;height:7px;background:#444"></div>
<div style="left:1090.7px;top:909px;width:79px;height:1px;background:#b4b6ba"></div><div style="left:1090.7px;top:910px;width:79px;height:1px;background:#fff"></div>
<svg style="left:1126px;top:902.6px" width="10" height="15" viewBox="0 0 10 15"><path d="M1 .8 L9 .8 L9 10.6 L5 14 L1 10.6 Z" fill="#eceef1" stroke="#85898f" stroke-width="1"/><path d="M2.2 2 L5 2 L5 12.4 L2.2 10 Z" fill="#fff"/></svg>

<div id="taskbar" style="top:922px;height:38px;background:linear-gradient(#5a616b,#2b2f37 3px,#101217 7px,#0c0e12 50%,#08090c)"></div>

<div style="left:129.3px;top:923.2px;width:142.7px;height:35px;border:1px solid #8b9099;border-radius:3px;background:linear-gradient(168deg,rgba(255,255,255,.13) 0,rgba(255,255,255,.05) 38%,rgba(255,255,255,0) 39%),linear-gradient(#565b64,#3c4048 46%,#15171c 54%,#1d2026);box-shadow:0 0 0 1px rgba(0,0,0,.55),0 0 0 1px rgba(255,255,255,.12) inset"></div>
<div style="left:390px;top:923.2px;width:142px;height:35px;border:1px solid #8b9099;border-radius:3px;background:linear-gradient(168deg,rgba(255,255,255,.13) 0,rgba(255,255,255,.05) 38%,rgba(255,255,255,0) 39%),linear-gradient(#565b64,#3c4048 46%,#15171c 54%,#1d2026);box-shadow:0 0 0 1px rgba(0,0,0,.55),0 0 0 1px rgba(255,255,255,.12) inset"></div>
<div style="left:592px;top:923.2px;width:142px;height:35px;border:1px solid #8b9099;border-radius:3px;background:linear-gradient(168deg,rgba(255,255,255,.13) 0,rgba(255,255,255,.05) 38%,rgba(255,255,255,0) 39%),linear-gradient(#565b64,#3c4048 46%,#15171c 54%,#1d2026);box-shadow:0 0 0 1px rgba(0,0,0,.55),0 0 0 1px rgba(255,255,255,.12) inset"></div>
<div style="left:737.8px;top:923.2px;width:142.20000000000005px;height:35px;border:1px solid #8b9099;border-radius:3px;background:linear-gradient(168deg,rgba(255,255,255,.13) 0,rgba(255,255,255,.05) 38%,rgba(255,255,255,0) 39%),linear-gradient(#90949a,#7c8087 46%,#5e6269 54%,#74787f);box-shadow:0 0 0 1px rgba(0,0,0,.55),0 0 0 1px rgba(255,255,255,.12) inset"></div>
<svg style="left:54px;top:927px" width="9" height="30" viewBox="0 0 9 30"><rect x="0.0" y="0.0" width="1.2" height="1.2" fill="#444a53"/><rect x="3.3" y="0.0" width="1.2" height="1.2" fill="#444a53"/><rect x="6.6" y="0.0" width="1.2" height="1.2" fill="#444a53"/><rect x="0.0" y="3.8" width="1.2" height="1.2" fill="#444a53"/><rect x="3.3" y="3.8" width="1.2" height="1.2" fill="#444a53"/><rect x="6.6" y="3.8" width="1.2" height="1.2" fill="#444a53"/><rect x="0.0" y="7.6" width="1.2" height="1.2" fill="#444a53"/><rect x="3.3" y="7.6" width="1.2" height="1.2" fill="#444a53"/><rect x="6.6" y="7.6" width="1.2" height="1.2" fill="#444a53"/><rect x="0.0" y="11.4" width="1.2" height="1.2" fill="#444a53"/><rect x="3.3" y="11.4" width="1.2" height="1.2" fill="#444a53"/><rect x="6.6" y="11.4" width="1.2" height="1.2" fill="#444a53"/><rect x="0.0" y="15.2" width="1.2" height="1.2" fill="#444a53"/><rect x="3.3" y="15.2" width="1.2" height="1.2" fill="#444a53"/><rect x="6.6" y="15.2" width="1.2" height="1.2" fill="#444a53"/><rect x="0.0" y="19.0" width="1.2" height="1.2" fill="#444a53"/><rect x="3.3" y="19.0" width="1.2" height="1.2" fill="#444a53"/><rect x="6.6" y="19.0" width="1.2" height="1.2" fill="#444a53"/><rect x="0.0" y="22.8" width="1.2" height="1.2" fill="#444a53"/><rect x="3.3" y="22.8" width="1.2" height="1.2" fill="#444a53"/><rect x="6.6" y="22.8" width="1.2" height="1.2" fill="#444a53"/><rect x="0.0" y="26.6" width="1.2" height="1.2" fill="#444a53"/><rect x="3.3" y="26.6" width="1.2" height="1.2" fill="#444a53"/><rect x="6.6" y="26.6" width="1.2" height="1.2" fill="#444a53"/></svg>
<svg style="left:889.5px;top:927px" width="9" height="30" viewBox="0 0 9 30"><rect x="0.0" y="0.0" width="1.2" height="1.2" fill="#444a53"/><rect x="3.3" y="0.0" width="1.2" height="1.2" fill="#444a53"/><rect x="6.6" y="0.0" width="1.2" height="1.2" fill="#444a53"/><rect x="0.0" y="3.8" width="1.2" height="1.2" fill="#444a53"/><rect x="3.3" y="3.8" width="1.2" height="1.2" fill="#444a53"/><rect x="6.6" y="3.8" width="1.2" height="1.2" fill="#444a53"/><rect x="0.0" y="7.6" width="1.2" height="1.2" fill="#444a53"/><rect x="3.3" y="7.6" width="1.2" height="1.2" fill="#444a53"/><rect x="6.6" y="7.6" width="1.2" height="1.2" fill="#444a53"/><rect x="0.0" y="11.4" width="1.2" height="1.2" fill="#444a53"/><rect x="3.3" y="11.4" width="1.2" height="1.2" fill="#444a53"/><rect x="6.6" y="11.4" width="1.2" height="1.2" fill="#444a53"/><rect x="0.0" y="15.2" width="1.2" height="1.2" fill="#444a53"/><rect x="3.3" y="15.2" width="1.2" height="1.2" fill="#444a53"/><rect x="6.6" y="15.2" width="1.2" height="1.2" fill="#444a53"/><rect x="0.0" y="19.0" width="1.2" height="1.2" fill="#444a53"/><rect x="3.3" y="19.0" width="1.2" height="1.2" fill="#444a53"/><rect x="6.6" y="19.0" width="1.2" height="1.2" fill="#444a53"/><rect x="0.0" y="22.8" width="1.2" height="1.2" fill="#444a53"/><rect x="3.3" y="22.8" width="1.2" height="1.2" fill="#444a53"/><rect x="6.6" y="22.8" width="1.2" height="1.2" fill="#444a53"/><rect x="0.0" y="26.6" width="1.2" height="1.2" fill="#444a53"/><rect x="3.3" y="26.6" width="1.2" height="1.2" fill="#444a53"/><rect x="6.6" y="26.6" width="1.2" height="1.2" fill="#444a53"/></svg>
<div style="left:8px;top:924px;width:35px;height:35px;border-radius:50%;background:radial-gradient(ellipse 70% 45% at 50% 100%,#49c8f8,rgba(60,170,240,.6) 50%,rgba(40,120,200,0) 100%),radial-gradient(circle at 50% 20%,#7fb2e0,#2a66ad 40%,#0f3774 70%,#0a2552);box-shadow:0 0 0 1.2px #0a0f18,0 0 0 2.2px rgba(120,150,190,.55)"></div>
<svg style="left:14px;top:929px" width="24" height="24" viewBox="0 0 24 24"><path d="M3.4 4.4 Q7 2 11 3.8 L9.4 10.8 Q5.6 9 1.8 11.2 Z" fill="#f0622a"/><path d="M12.6 4.4 Q16.4 6 21.6 3.4 L20 10.4 Q15.4 12.6 11 11 Z" fill="#8cc63f"/><path d="M1.4 12.8 Q5.4 10.6 9 12.4 L7.4 19.4 Q3.8 17.6 -.2 19.8 Z" fill="#4aa8ea"/><path d="M10.6 12.8 Q15 14.4 19.6 12 L18 19 Q13.6 21.4 9 19.6 Z" fill="#fbc52d"/></svg>
<svg style="left:82px;top:924px" width="34" height="34" viewBox="0 0 34 34"><defs><linearGradient id="ieg" x1="0" y1="0" x2="0" y2="1"><stop offset="0" stop-color="#6fd0fa"/><stop offset="1" stop-color="#1d8ee2"/></linearGradient></defs><path d="M17.4 5.4 C10 5.4 5.2 10.6 5.2 17 C5.2 23.6 10 28.8 17.4 28.8 C22.6 28.8 26.6 26 28.2 21.8 L21.8 21.8 C20.8 23.2 19.4 24 17.4 24 C14.2 24 12 21.8 11.8 18.8 L29.2 18.8 C29.8 11.2 25 5.4 17.4 5.4 Z M12 14.6 C12.6 12 14.6 10.4 17.4 10.4 C20.2 10.4 22.2 12 22.6 14.6 Z" fill="url(#ieg)"/><path d="M29.4 6.2 C32 1.4 25.6 1.2 18.4 5.2 C9 10.6 1.4 22 3.4 28.6 C4.6 32 9.2 30.4 12.2 28 C7.4 30 5 28.4 6.4 23.6 C8 18 15 10.4 21.6 6.6 C26 4 30 3.6 29.4 6.2 Z" fill="#f6c81e" stroke="#d9a40e" stroke-width=".5"/></svg>
<div style="left:139px;top:926.5px;width:28px;height:28px;border-radius:50%;background:radial-gradient(circle at 55% 35%,#6fb6f2,#2a6fd0 45%,#1a3f9a 80%)"></div>
<svg style="left:138px;top:925.5px" width="30" height="30" viewBox="0 0 30 30"><path d="M3.2 8 Q.6 14 2.6 20 Q5.6 27.6 14 28.8 Q22.6 29.4 27 22.6 Q30 17 28.4 10.6 Q28.2 14 26.8 15.6 Q27 19 24 21.6 Q20 24.6 15.4 22.6 Q18.6 22.4 20.4 20.4 Q17 20.8 14.4 18.6 Q12 16.4 13 13.6 Q14.4 14.2 16 13.4 L18.4 11.6 Q15.6 11.6 14.6 9.6 Q12.6 9.4 11.4 10.4 Q10.6 8 11.8 5.6 Q9 6.6 8 9.4 Q6.4 8.4 6.4 6 Q4.6 7.4 4.4 10.4 Q3.4 9.6 3.2 8 Z" fill="#ee7a1c" stroke="#d2500f" stroke-width=".5"/><path d="M28.4 10.6 Q30 17 27 22.6 Q24 27.2 19 28.4 Q25 25 26.8 18 Q27.6 14 28.4 10.6 Z" fill="#f9c534"/><path d="M3 12 Q2 19 7 24.6 Q11 28.4 16 28.6 Q8 26 5.4 19 Q4 15.6 3 12 Z" fill="#d9420f"/></svg>
<div style="left:288.5px;top:927.8px;width:26.4px;height:26.4px;border-radius:50%;background:conic-gradient(from 60deg,#f6c414 0 120deg,#2da14a 120deg 240deg,#e0392c 240deg 360deg)"></div>
<div style="left:295.5px;top:934.8px;width:12.4px;height:12.4px;border-radius:50%;background:radial-gradient(circle at 50% 35%,#7fb4f2,#2f6fd0);border:2px solid #f2f2f2"></div>
<svg style="left:344px;top:929px" width="28" height="27" viewBox="344 929 28 27"><path d="M346.4 931.6 L366 931 L366 954 L346.4 953 Z" fill="#86c0e6" stroke="#5a9ed2" stroke-width=".6"/><path d="M366 931 L370.4 932.6 L370.4 952.4 L366 954 Z" fill="#5f9fd2"/><path d="M346.4 931.6 L366 931 L366 937 L346.4 939 Z" fill="#a9d6f2" opacity=".7"/><circle cx="355.6" cy="942" r="8.2" fill="#f27a1a" stroke="#fbd0a0" stroke-width=".9"/><circle cx="355.6" cy="940" r="6" fill="#fa9a3a" opacity=".7"/><path d="M352.6 937 L361 942 L352.6 947 Z" fill="#fff"/></svg>
<svg style="left:398px;top:925px" width="27" height="32" viewBox="0 0 27 32"><path d="M5 3.6 L8 1.6 L19 2.4 L20 4 L20 27 L5 27 Z" fill="#f7ecae" stroke="#dcc66a" stroke-width=".6"/><path d="M2 4 L8 1.4 L9.4 30.6 L4.6 27.6 Z" fill="#ecd070" stroke="#caa73a" stroke-width=".6"/><path d="M9 6 L21.6 7.6 L22.6 29.6 L9.4 30.6 Z" fill="#f3dd84" stroke="#d2b44a" stroke-width=".6"/><path d="M9 6 L21.6 7.6 L22 18 L9.2 17 Z" fill="#f8e9a4" opacity=".8"/><rect x="20" y="22.6" width="2.6" height="5" fill="#e8f2fa" stroke="#9ab" stroke-width=".4"/></svg>
<svg style="left:546px;top:926px" width="29" height="28" viewBox="0 0 29 28"><defs><linearGradient id="ppg" x1="0" y1="0" x2=".6" y2="1"><stop offset="0" stop-color="#fbd9c2"/><stop offset=".45" stop-color="#f5a57a"/><stop offset="1" stop-color="#df4a17"/></linearGradient></defs><rect x=".6" y=".6" width="26.6" height="26.4" rx="1.6" fill="url(#ppg)" stroke="#c8410f" stroke-width=".9"/><text x="4.2" y="19.6" font-family="Liberation Sans,sans-serif" font-weight="700" font-size="21" fill="#d8450f">P</text><path d="M12.6 15.6 L27.6 12.8 L28.4 23 L14 26.4 Z" fill="#fdf3ee" stroke="#e8a88a" stroke-width=".5"/><ellipse cx="21" cy="17.4" rx="4.2" ry="2.8" fill="#ee6a3a" transform="rotate(-10 21 17.4)"/><path d="M15.6 22.2 L26.6 20 M15.8 24.2 L26.8 22" stroke="#ee7a4a" stroke-width="1"/></svg>
<svg style="left:601px;top:926px" width="29" height="28" viewBox="0 0 29 28"><defs><linearGradient id="wdg" x1="0" y1="0" x2=".7" y2="1"><stop offset="0" stop-color="#ffffff"/><stop offset=".5" stop-color="#cfe1f8"/><stop offset="1" stop-color="#7fa9e6"/></linearGradient></defs><rect x=".8" y=".8" width="25.6" height="26" rx="1.4" fill="url(#wdg)" stroke="#2b5fba" stroke-width="1.5"/><text x="2.6" y="20.4" font-family="Liberation Sans,sans-serif" font-weight="700" font-size="21.5" fill="#1a4ca6" textLength="21" lengthAdjust="spacingAndGlyphs">W</text><path d="M15.6 17.6 L28 14.4 L28.6 21.6 L17 26 Z" fill="#f7faff" stroke="#9db8e2" stroke-width=".5"/><path d="M18 20.4 L26.6 17.8 M18.4 22.6 L27 19.8" stroke="#b5c9ea" stroke-width=".8"/></svg>
<svg style="left:745px;top:925px" width="32" height="32" viewBox="0 0 32 32"><path d="M14 8.6 C6 8.6 1.4 14 1.4 19.6 C1.4 25 6 28.6 11.6 28.6 C14.6 28.6 14 26 15.6 24.6 C17.6 23 22 24.6 24.6 21 C28 16 23 8.6 14 8.6 Z" fill="#bcd6ef" stroke="#6f93c0" stroke-width="1"/><circle cx="8" cy="17" r="2.4" fill="#4ea84a"/><circle cx="13.6" cy="13.6" r="2.4" fill="#e9b32a"/><circle cx="19" cy="15" r="2.2" fill="#d8452f"/><circle cx="8.6" cy="23" r="2.2" fill="#3f74d4"/><path d="M27.6 3 L29.6 4 L19.6 27 L17 26 Z" fill="#e4882a"/><path d="M26 .6 L31 2.6 L29.4 7 L26.4 6 Z" fill="#d6b06a"/></svg>
<svg style="left:930px;top:929px" width="184" height="26" viewBox="930 929 184 26">
<rect x="935" y="931" width="8" height="15" rx="2" fill="#8d949e" stroke="#555c66" stroke-width=".6"/><rect x="936.6" y="946" width="4.6" height="4" fill="#6a717b"/><circle cx="945.4" cy="947" r="4.6" fill="#2fa84a" stroke="#e6f4e6" stroke-width=".7"/><path d="M943.2 947 L944.8 948.8 L947.8 945" stroke="#fff" stroke-width="1.2" fill="none"/>
<path d="M958 941 Q966 932 975 937 L975 946 Q966 950 958 941 Z" fill="#76b900"/><path d="M962 941 Q966 937 970 940 Q967 944.4 962 941 Z" fill="#1f2a10"/>
<rect x="983" y="933" width="11" height="15" fill="#4f9ae0" stroke="#dfeaf6" stroke-width=".6"/><path d="M985 936 h3 v3 h-3 Z" fill="#e8542a"/><path d="M989 936 h3 v3 h-3 Z" fill="#7cc142"/><path d="M985 940 h3 v3 h-3 Z" fill="#3f9be0"/><path d="M989 940 h3 v3 h-3 Z" fill="#f9c22b"/><ellipse cx="988.5" cy="941" rx="8.6" ry="3" fill="none" stroke="#f4b21e" stroke-width="1.3" transform="rotate(-20 988.5 941)"/>
<circle cx="1010.7" cy="941.5" r="7.4" fill="#f47a18" stroke="#ffb066" stroke-width=".8"/><path d="M1006.6 943.6 A4.4 4.4 0 1 1 1014.8 943.6" fill="none" stroke="#fff" stroke-width="2.2"/>
<rect x="1026.6" y="934" width="1.4" height="15" fill="#f2f2f2"/><path d="M1028 935 Q1032 933.6 1035 936 Q1037 937.4 1040 936.4 L1040 942 Q1037 943.4 1034.6 941.6 Q1032 940 1028 941.4 Z" fill="#f2f2f2"/>
<rect x="1052" y="938.6" width="11" height="8" fill="none" stroke="#f2f2f2" stroke-width="1.3"/><path d="M1055 950 L1060.4 950 M1057.6 946.6 L1057.6 950" stroke="#f2f2f2" stroke-width="1.3"/><path d="M1049 933 v5 M1051.6 933 v5 M1048 938 h4.6 v3 h-4.6 Z M1050.2 941 v4 h2" stroke="#f2f2f2" stroke-width="1" fill="none"/>
<path d="M1072 939 L1075 939 L1079 935 L1079 948 L1075 944 L1072 944 Z" fill="#f2f2f2"/><path d="M1081.4 938.6 Q1083.4 941.5 1081.4 944.4 M1083.6 936.6 Q1086.6 941.5 1083.6 946.4" stroke="#f2f2f2" stroke-width="1" fill="none"/>
<path d="M1093 934 L1107 934 L1108 945 Q1100 951 1092 945 Z" fill="#c9ccd2" stroke="#8a8f98" stroke-width=".6"/><circle cx="1100" cy="941" r="4.8" fill="#e2382c"/><path d="M1098 939 L1102 943 M1102 939 L1098 943" stroke="#ffd9b0" stroke-width="1.3"/>
</svg>
<div style="left:1186.5px;top:923.5px;width:13px;height:36.5px;border:1px solid rgba(150,158,170,.7);border-bottom:none;background:linear-gradient(160deg,rgba(140,148,160,.55),rgba(80,86,96,.5) 45%,rgba(30,34,40,.5) 55%,rgba(60,66,76,.5))"></div>

<div class="t" style="left:115.6px;top:3.2px;font-size:11px;letter-spacing:0.10px;color:#000">Безымянный - Paint</div>
<div class="t" style="left:65.8px;top:25.5px;font-size:11px;letter-spacing:-0.41px;color:#1e395b">Главная</div>
<div class="t" style="left:132.6px;top:25.5px;font-size:11px;letter-spacing:-0.45px;color:#1e395b">Вид</div>
<div class="t" style="left:7.8px;top:82.0px;font-size:11px;letter-spacing:-0.33px;color:#1e2a4a">Вставить</div>
<div class="t" style="left:75.6px;top:49.5px;font-size:11px;letter-spacing:-0.43px;color:#8d8d8d">Вырезать</div>
<div class="t" style="left:75.8px;top:70.4px;font-size:11px;letter-spacing:-0.03px;color:#8d8d8d">Копировать</div>
<div class="t" style="left:35.7px;top:113.3px;font-size:11px;letter-spacing:-0.25px;color:#7d89a0">Буфер обмена</div>
<div class="t" style="left:151.1px;top:82.0px;font-size:11px;letter-spacing:-0.38px;color:#1e2a4a">Выделить</div>
<div class="t" style="left:222.2px;top:49.5px;font-size:11px;letter-spacing:-0.11px;color:#8d8d8d">Обрезать</div>
<div class="t" style="left:222.2px;top:70.6px;font-size:11px;letter-spacing:-0.15px;color:#1e2a4a">Изменить размер</div>
<div class="t" style="left:222.3px;top:91.0px;font-size:11px;letter-spacing:-0.07px;color:#1e2a4a">Повернуть</div>
<div class="t" style="left:196.8px;top:113.3px;font-size:11px;letter-spacing:-0.01px;color:#7d89a0">Изображение</div>
<div class="t" style="left:324.5px;top:113.3px;font-size:11px;letter-spacing:-0.20px;color:#7d89a0">Инструменты</div>
<div class="t" style="left:405.9px;top:82.0px;font-size:11px;letter-spacing:-0.25px;color:#1e2a4a">Кисти</div>
<div class="t" style="left:622.6px;top:49.8px;font-size:11px;letter-spacing:-0.21px;color:#8d8d8d">Контур</div>
<div class="t" style="left:622.5px;top:70.6px;font-size:11px;letter-spacing:-0.43px;color:#8d8d8d">Заливка</div>
<div class="t" style="left:543.9px;top:113.3px;font-size:11px;letter-spacing:-0.15px;color:#7d89a0">Фигуры</div>
<div class="t" style="left:686.9px;top:82.0px;font-size:11px;letter-spacing:-0.22px;color:#1e2a4a">Толщина</div>
<div class="t" style="left:752.1px;top:82.0px;font-size:11px;letter-spacing:-0.45px;color:#1e2a4a">Цвет</div>
<div class="t" style="left:760.4px;top:94.0px;font-size:11px;letter-spacing:-0.45px;color:#1e2a4a">1</div>
<div class="t" style="left:791.4px;top:82.0px;font-size:11px;letter-spacing:-0.45px;color:#1e2a4a">Цвет</div>
<div class="t" style="left:799.4px;top:94.0px;font-size:11px;letter-spacing:-0.12px;color:#1e2a4a">2</div>
<div class="t" style="left:902.8px;top:113.3px;font-size:11px;letter-spacing:-0.43px;color:#7d89a0">Цвета</div>
<div class="t" style="left:1031.5px;top:82.0px;font-size:11px;letter-spacing:-0.20px;color:#1e2a4a">Изменение</div>
<div class="t" style="left:1041.9px;top:94.0px;font-size:11px;letter-spacing:-0.11px;color:#1e2a4a">цветов</div>
<div class="t" style="left:314.5px;top:904.0px;font-size:11px;letter-spacing:-0.06px;color:#000">1095 × 718пкс</div>
<div class="t" style="left:1033.5px;top:904.0px;font-size:11px;letter-spacing:-0.45px;color:#000">100%</div>
<div class="t" style="left:171.6px;top:935.0px;font-size:11px;letter-spacing:0.12px;color:#fff;text-shadow:0 0 2px #000">Журналы - Дне...</div>
<div class="t" style="left:432.0px;top:935.0px;font-size:11px;letter-spacing:0.09px;color:#fff;text-shadow:0 0 2px #000">Ур. 24 Поиск ин...</div>
<div class="t" style="left:634.6px;top:935.0px;font-size:11px;letter-spacing:0.05px;color:#fff;text-shadow:0 0 2px #000">Практическая р...</div>
<div class="t" style="left:780.4px;top:935.0px;font-size:11px;letter-spacing:0.09px;color:#fff;text-shadow:0 0 2px #000">Безымянный - ...</div>
<div class="t" style="left:906.3px;top:932.0px;font-size:11px;letter-spacing:-0.45px;color:#fff;text-shadow:0 0 2px #000">RU</div>
<div class="t" style="left:1136.8px;top:927.0px;font-size:11px;letter-spacing:-0.37px;color:#fff;text-shadow:0 0 2px #000">12:09</div>
<div class="t" style="left:1124.6px;top:943.0px;font-size:11px;letter-spacing:-0.44px;color:#fff;text-shadow:0 0 2px #000">06.05.2014</div>
</div></body></html>
